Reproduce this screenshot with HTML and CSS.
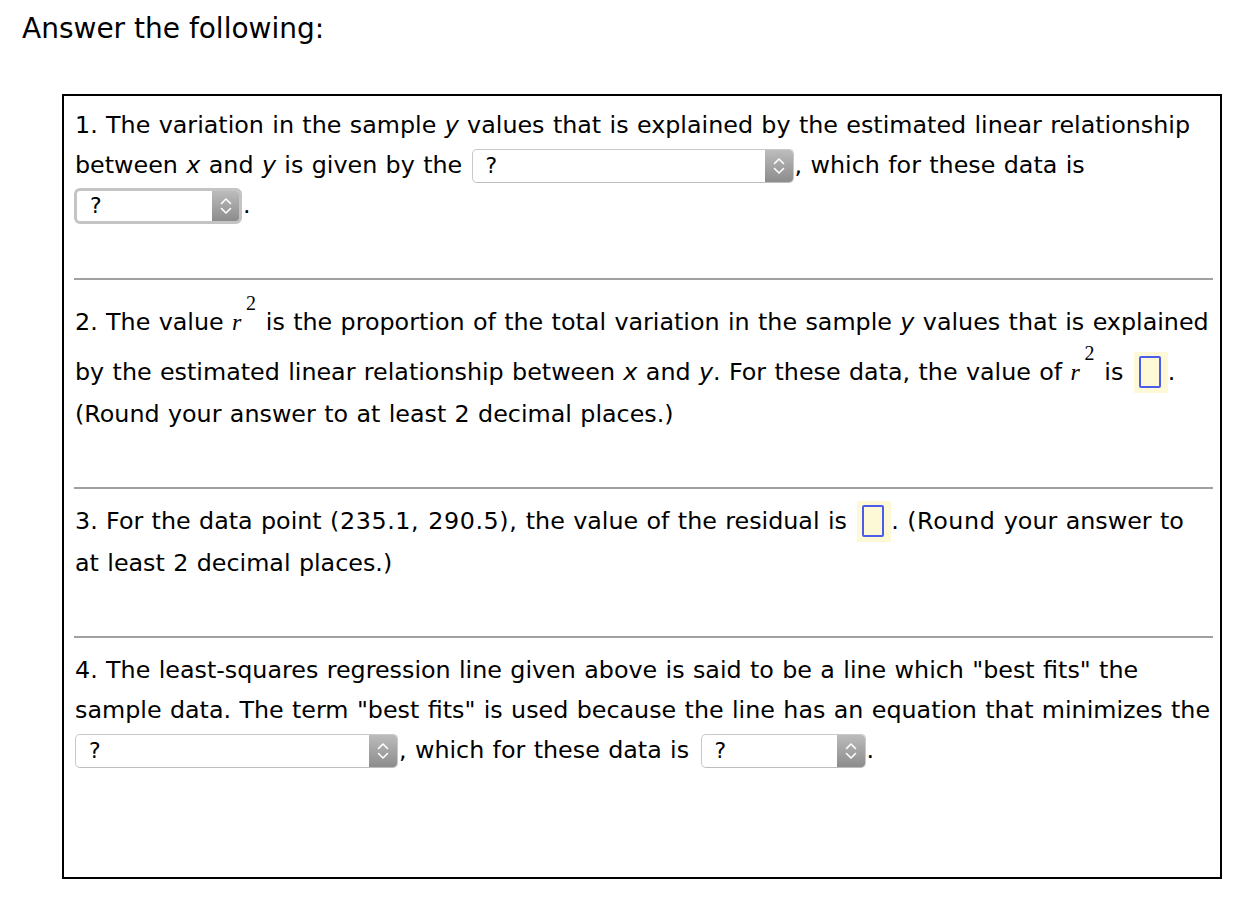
FILE: index.html
```html
<!DOCTYPE html>
<html lang="en">
<head>
<meta charset="utf-8">
<title>Answer the following</title>
<link rel="stylesheet" href="styles.css">
</head>
<body>
<h1 class="title">Answer the following:</h1>
<div class="box">
  <div class="item item-first">
    1. The variation in the sample <i>y</i> values that is explained by the estimated linear relationship<br>between <i>x</i> and <i>y</i> is given by the <span class="select sel-a"><span class="sel-text">?</span><span class="sel-arrow"><svg width="12" height="18" viewBox="0 0 12 18"><path d="M1.5 6.5 L6 2 L10.5 6.5 M1.5 11.5 L6 16 L10.5 11.5" fill="none" stroke="#fff" stroke-width="1.6" stroke-linecap="round" stroke-linejoin="round"/></svg></span></span>, which for these data is<br><span class="select sel-b sel-focus"><span class="sel-text">?</span><span class="sel-arrow"><svg width="12" height="18" viewBox="0 0 12 18"><path d="M1.5 6.5 L6 2 L10.5 6.5 M1.5 11.5 L6 16 L10.5 11.5" fill="none" stroke="#fff" stroke-width="1.6" stroke-linecap="round" stroke-linejoin="round"/></svg></span></span>.
  </div>
  <hr class="sep">
  <div class="item">
    2. The value <span class="msup"><span class="mi">r</span><span class="mn">2</span></span> is the proportion of the total variation in the sample <i>y</i> values that is explained<br>by the estimated linear relationship between <i>x</i> and <i>y</i>. For these data, the value of <span class="msup"><span class="mi">r</span><span class="mn">2</span></span> is <span class="answer"><span class="answer-field"></span></span>.<br>(Round your answer to at least 2 decimal places.)
  </div>
  <hr class="sep">
  <div class="item">
    3. For the data point <span class="coord">(235.1, 290.5),</span> the value of the residual is <span class="answer"><span class="answer-field"></span></span>. <span class="coord">(Round</span> your answer to<br>at least 2 decimal places.)
  </div>
  <hr class="sep">
  <div class="item">
    4. The least-squares regression line given above is said to be a line which "best fits" the<br>sample data. The term "best fits" is used because the line has an equation that minimizes the<br><span class="select sel-c"><span class="sel-text">?</span><span class="sel-arrow"><svg width="12" height="18" viewBox="0 0 12 18"><path d="M1.5 6.5 L6 2 L10.5 6.5 M1.5 11.5 L6 16 L10.5 11.5" fill="none" stroke="#fff" stroke-width="1.6" stroke-linecap="round" stroke-linejoin="round"/></svg></span></span>, which for these data is <span class="select sel-d"><span class="sel-text">?</span><span class="sel-arrow"><svg width="12" height="18" viewBox="0 0 12 18"><path d="M1.5 6.5 L6 2 L10.5 6.5 M1.5 11.5 L6 16 L10.5 11.5" fill="none" stroke="#fff" stroke-width="1.6" stroke-linecap="round" stroke-linejoin="round"/></svg></span></span>.
  </div>
</div>
</body>
</html>
```
FILE: styles.css
```css
body {
  margin: 0;
  background: #fff;
  color: #000;
  font-family: "DejaVu Sans", Verdana, sans-serif;
}

.title {
  margin: 0;
  padding: 14px 0 0 22px;
  font-size: 28px;
  line-height: 30px;
  font-weight: normal;
}

.box {
  margin: 50px 0 0 62px;
  width: 1160px;
  height: 785px;
  box-sizing: border-box;
  border: 2px solid #000;
  padding: 0 0 0 10px;
}

.item {
  font-size: 23.8px;
  word-spacing: 0.8px;
  line-height: 40px;
  padding: 12px 0 53px 1px;
  white-space: nowrap;
}

.item-first {
  padding-top: 9px;
}

.sep {
  margin: 0 7px 0 0;
  border: 0;
  height: 2px;
  background: #a0a0a0;
}

.item i {
  font-style: italic;
}

.coord {
  letter-spacing: 0.6px;
}

.select {
  display: inline-flex;
  vertical-align: middle;
  box-sizing: border-box;
  height: 34px;
  margin: 0 1px 0 4px;
  border: 1px solid #c9c9c9;
  border-bottom-color: #bdbdbd;
  border-radius: 5px;
  background: #fff;
  overflow: hidden;
  line-height: normal;
  position: relative;
  top: -1px;
  word-spacing: 0;
}

.sel-a { width: 322px; margin-left: 1px; }
.sel-b { width: 168px; margin-left: -1px; }
.sel-c { width: 323px; margin-left: 0; }
.sel-d { width: 165px; margin-left: 3px; }

.sel-focus {
  height: 36px;
  border: 3px solid #c4c4c4;
  border-radius: 6px;
}

.sel-text {
  flex: 1;
  display: flex;
  align-items: center;
  padding-left: 13px;
  font-size: 22px;
}

.sel-arrow {
  width: 28px;
  display: flex;
  align-items: center;
  justify-content: center;
  background: linear-gradient(#bcbcbc, #8c8c8c);
}

.sel-focus .sel-arrow {
  width: 27px;
}

.answer {
  display: inline-block;
  vertical-align: middle;
  margin-left: 2px;
  padding: 4px 7px 5px 5px;
  background: #fdf9d6;
  line-height: 0;
  position: relative;
  top: -1px;
}

.answer-field {
  display: inline-block;
  box-sizing: border-box;
  width: 22px;
  height: 32px;
  border: 2px solid #4b5de8;
  border-radius: 2px;
}

.msup {
  display: inline-block;
  position: relative;
  padding: 10px 16px 0 0;
  line-height: 40px;
}

.mi {
  font-family: "Liberation Serif", "Times New Roman", serif;
  font-style: italic;
  font-size: 24px;
}

.mn {
  position: absolute;
  top: 1px;
  left: 14px;
  font-family: "Liberation Serif", "Times New Roman", serif;
  font-size: 20px;
  line-height: 1;
}
```
